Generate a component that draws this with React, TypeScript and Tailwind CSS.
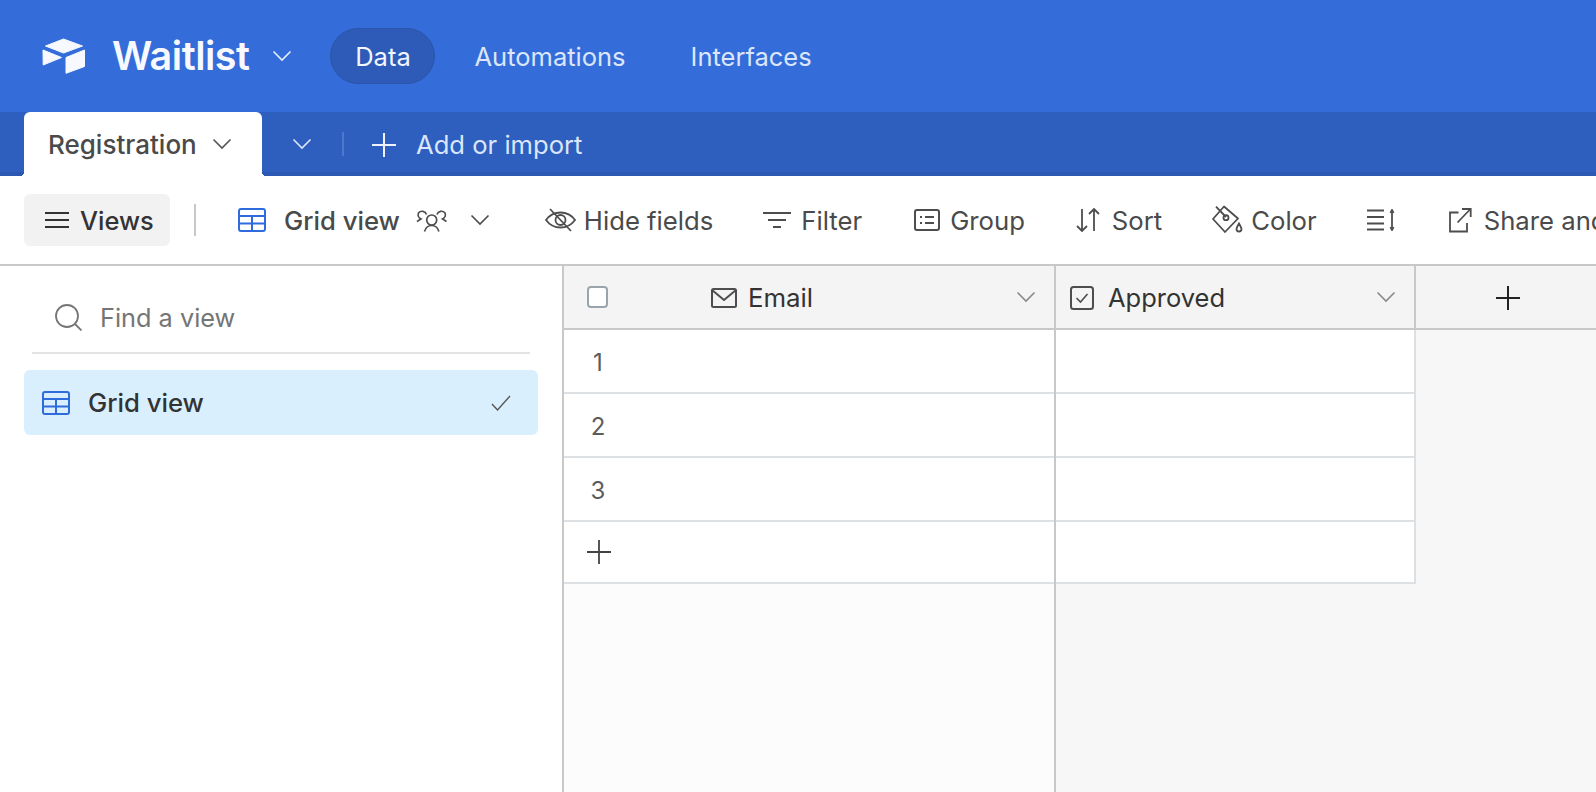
import React from "react";

const font = { fontFamily: "Inter, sans-serif" };

function Chevron({ className = "", color = "currentColor" }: { className?: string; color?: string }) {
  return (
    <svg width="20" height="12" viewBox="0 0 20 12" fill="none" className={"shrink-0 " + className}>
      <path d="M1.5 1.5 L10 10 L18.5 1.5" stroke={color} strokeWidth="1.6" />
    </svg>
  );
}

function GridIcon({ className = "" }: { className?: string }) {
  return (
    <svg width="28" height="24" viewBox="0 0 28 24" fill="none" className={"shrink-0 " + className}>
      <rect x="1" y="1" width="26" height="22" rx="2" stroke="#2f6bdd" strokeWidth="2" />
      <path d="M1 8H27M1 15.5H27M14 8V23" stroke="#2f6bdd" strokeWidth="2" />
    </svg>
  );
}

function Plus({ size = 24, color = "currentColor", width = 2 }: { size?: number; color?: string; width?: number }) {
  return (
    <svg width={size} height={size} viewBox="0 0 24 24" fill="none" className="shrink-0">
      <path d="M12 0V24M0 12H24" stroke={color} strokeWidth={width} />
    </svg>
  );
}

function Logo() {
  return (
    <svg width="44" height="36" viewBox="0 0 44 36" fill="#f7f9ff" className="shrink-0">
      <path d="M21.5 1 L40.5 8 L21.5 15 L3.5 8 Z" stroke="#f7f9ff" strokeWidth="1" strokeLinejoin="round" />
      <path d="M1 12 L19.5 19.5 L1.2 27 Z" stroke="#f7f9ff" strokeWidth="1" strokeLinejoin="round" />
      <path d="M42.5 12 V28.5 L24 35.3 V19.5 Z" stroke="#f7f9ff" strokeWidth="1" strokeLinejoin="round" />
    </svg>
  );
}

function Tool({ icon, label, className = "" }: { icon: React.ReactNode; label: string; className?: string }) {
  return (
    <div className={"flex items-center shrink-0 " + className}>
      {icon}
      <span className="pt-[2px] text-[25.7px] text-[#4a4a4a] whitespace-nowrap">{label}</span>
    </div>
  );
}

const stroke = "#4d4d4d";

function Row({ n, last }: { n?: number; last?: boolean }) {
  return (
    <div className={"flex " + (last ? "h-[62px]" : "h-[64px]")}>
      <div className="w-[490px] shrink-0 bg-white border-b-2 border-[#dde0e3] flex items-center">
        {n ? (
          <span className="w-[68px] pt-[4px] text-center text-[24px] text-[#5c5c5c]">{n}</span>
        ) : (
          <span className="ml-[23px] text-[#444444]">
            <Plus size={24} width={1.8} />
          </span>
        )}
      </div>
      <div className="w-[2px] shrink-0 bg-[#c8c8c8]" />
      <div className="w-[358px] shrink-0 bg-white border-b-2 border-[#dde0e3]" />
      <div className="w-[2px] shrink-0 bg-[#dde0e3]" />
    </div>
  );
}

export default function App() {
  return (
    <div className="w-[1596px] h-[792px] overflow-hidden bg-white flex flex-col" style={font}>
      <header className="h-[112px] shrink-0 bg-[#346dd9] flex items-center pl-[42px]">
        <Logo />
        <span className="ml-[26px] pt-[2px] text-[39.5px] font-semibold tracking-[-0.5px] text-[#f7f9ff] leading-none">Waitlist</span>
        <Chevron className="ml-[23px]" color="#e6edfb" />
        <div className="ml-[38px] w-[105px] h-[56px] pt-[3px] rounded-full bg-[#2d5bb7] border border-[#2a55ab] flex items-center justify-center text-[25.5px] text-[#f2f6ff]">
          Data
        </div>
        <span className="ml-[39px] pt-[3px] text-[25.5px] text-[#dbe6fb]">Automations</span>
        <span className="ml-[65px] pt-[3px] text-[25.5px] text-[#dbe6fb]">Interfaces</span>
      </header>

      <div className="h-[64px] shrink-0 bg-[#2e5fbe] shadow-[inset_0_-4px_0_#2a58b2] flex items-center pl-[24px]">
        <div className="relative w-[238px] h-[64px] shrink-0 bg-white rounded-t-[6px] flex items-center pl-[24px] text-[#4a4a4a]">
          <span className="pt-[2px] text-[26px] font-medium leading-none">Registration</span>
          <Chevron className="ml-[15px]" color="#555555" />
          <span className="absolute bottom-0 left-[-4px] w-[4px] h-[4px] bg-[radial-gradient(circle_at_0_0,#2a58b2_4px,#ffffff_4px)]" />
          <span className="absolute bottom-0 right-[-4px] w-[4px] h-[4px] bg-[radial-gradient(circle_at_100%_0,#2a58b2_4px,#ffffff_4px)]" />
        </div>
        <Chevron className="ml-[30px]" color="#dbe6fb" />
        <div className="ml-[30px] w-[2px] h-[24px] bg-[#4a78d0]" />
        <span className="ml-[28px] mt-[1px] text-[#eef3fe]">
          <Plus size={24} />
        </span>
        <span className="ml-[20px] pt-[2px] text-[25.6px] text-[#dbe6fb] whitespace-nowrap">Add or import</span>
      </div>

      <div className="h-[88px] shrink-0 flex items-center pl-[24px] overflow-hidden">
        <div className="w-[146px] h-[52px] shrink-0 rounded-[6px] bg-[#f2f2f2] flex items-center pl-[21px]">
          <svg width="24" height="18" viewBox="0 0 24 18" fill="none" className="shrink-0">
            <path d="M0 2H24M0 9H24M0 16H24" stroke="#333333" strokeWidth="2" />
          </svg>
          <span className="ml-[11px] pt-[3px] text-[25.4px] font-medium text-[#333333]">Views</span>
        </div>
        <div className="ml-[24px] w-[2px] h-[32px] shrink-0 bg-[#c8c8c8]" />
        <GridIcon className="ml-[42px]" />
        <span className="ml-[18px] pt-[2px] text-[25.7px] font-medium text-[#4a4a4a] whitespace-nowrap">Grid view</span>
        <svg width="32" height="24" viewBox="0 0 32 24" fill="none" className="ml-[16px] shrink-0" stroke="#4d4d4d" strokeWidth="1.7">
          <circle cx="15.700" cy="12" r="5" />
          <path d="M8.500 23.500c1-3.500 3-6 7.200-6s6.200 2.500 7.200 6" />
          <path d="M10.500 6.500a4.600 4.600 0 0 0-8-1.500a4.600 4.600 0 0 0 2.500 6L1 13.500" />
          <path d="M21 6.500a4.600 4.600 0 0 1 8-1.500a4.600 4.600 0 0 1-2.500 6L30.500 13.500" />
        </svg>
        <Chevron className="ml-[22px]" color="#4d4d4d" />
        <Tool
          className="ml-[55px] gap-[8px]"
          label="Hide fields"
          icon={
            <svg width="31" height="24" viewBox="0 0 31 24" fill="none" stroke={stroke} strokeWidth="1.8" className="shrink-0">
              <path d="M1 12C5 6.500 10 4.500 15.500 4.500S26 6.500 30 12C26 17.500 21 19.500 15.500 19.500S5 17.500 1 12Z" />
              <circle cx="15.500" cy="12" r="5" />
              <path d="M5 1L26 23" />
            </svg>
          }
        />
        <Tool
          className="ml-[50px] gap-[10px]"
          label="Filter"
          icon={
            <svg width="28" height="18" viewBox="0 0 28 18" fill="none" stroke={stroke} strokeWidth="2" className="shrink-0">
              <path d="M0 2H28M5 9H23M10 16H18" />
            </svg>
          }
        />
        <Tool
          className="ml-[52px] gap-[10px]"
          label="Group"
          icon={
            <svg width="26" height="22" viewBox="0 0 26 22" fill="none" stroke={stroke} strokeWidth="2" className="shrink-0">
              <rect x="1" y="1" width="24" height="20" rx="2" />
              <path d="M6 8H8M11 8H20M6 14H8M11 14H20" />
            </svg>
          }
        />
        <Tool
          className="ml-[51px] gap-[12px]"
          label="Sort"
          icon={
            <svg width="24" height="24" viewBox="0 0 24 24" fill="none" stroke={stroke} strokeWidth="1.8" className="shrink-0">
              <path d="M6 1V23M1 18L6 23L11 18M18 23V1M13 6L18 1L23 6" />
            </svg>
          }
        />
        <Tool
          className="ml-[50px] gap-[8px]"
          label="Color"
          icon={
            <svg width="31" height="30" viewBox="0 0 31 30" fill="none" stroke={stroke} strokeWidth="1.8" className="shrink-0">
              <path d="M4 1.700L14 12" />
              <path d="M12 1.500L26 13.500L13 27L1 14Z" strokeLinejoin="round" />
              <circle cx="14" cy="12.700" r="2.500" />
              <path d="M27 18.500C25.500 21 24.500 22.500 24.500 24a2.500 2.500 0 0 0 5 0C29.500 22.500 28.500 21 27 18.500Z" />
            </svg>
          }
        />
        <svg width="30" height="24" viewBox="0 0 30 24" fill="none" stroke={stroke} strokeWidth="2" className="ml-[50px] shrink-0">
          <path d="M0 2.500H17M0 9H17M0 15.500H17M0 21.500H17" />
          <path d="M25 2V22" strokeWidth="1.800" />
          <path d="M23 4.500L25 1L27 4.500ZM23 19.500L25 23L27 19.500Z" fill="#4d4d4d" strokeWidth="0.8" />
        </svg>
        <Tool
          className="ml-[52px] gap-[11px]"
          label="Share and sync"
          icon={
            <svg width="24" height="26" viewBox="0 0 24 26" fill="none" stroke={stroke} strokeWidth="1.8" className="shrink-0">
              <path d="M9.500 5.500H1V24.500H18V16" />
              <path d="M8.500 15.500L21.500 2M13 2H21.700V10" />
            </svg>
          }
        />
      </div>

      <div className="flex-1 min-h-0 border-t-2 border-[#c8c8c8] flex">
        <aside className="w-[562px] shrink-0 bg-white px-[24px]">
          <div className="mx-[8px] h-[88px] border-b-2 border-[#e3e3e3] flex items-center pl-[23px] pt-[17px]">
            <svg width="27" height="27" viewBox="0 0 27 27" fill="none" stroke="#757575" strokeWidth="1.8" className="shrink-0">
              <circle cx="12" cy="12" r="11" />
              <path d="M20 20L26.500 26.500" />
            </svg>
            <span className="ml-[18px] text-[25.3px] text-[#757575]">Find a view</span>
          </div>
          <div className="mt-[16px] h-[65px] rounded-[6px] bg-[#d9effd] flex items-center pl-[18px] pr-[27px]">
            <GridIcon />
            <span className="ml-[18px] pt-[2px] text-[25.7px] font-medium text-[#333333]">Grid view</span>
            <svg width="20" height="16" viewBox="0 0 20 16" fill="none" stroke="#555555" strokeWidth="1.4" className="ml-auto shrink-0">
              <path d="M1 9L6.500 15L19 1" />
            </svg>
          </div>
        </aside>
        <div className="w-[2px] shrink-0 bg-[#c8c8c8]" />
        <main className="flex-1 min-w-0 relative bg-[#f7f7f7] flex flex-col">
          <div className="flex h-[64px] shrink-0 bg-[#f4f4f4] border-b-2 border-[#c8c8c8]">
            <div className="w-[490px] shrink-0 flex items-center">
              <div className="ml-[23px] w-[21px] h-[22px] rounded-[4px] bg-white border-2 border-[#9aa5ab]" />
              <svg width="26" height="20" viewBox="0 0 26 20" fill="none" stroke="#4d4d4d" strokeWidth="2" className="ml-[103px] mt-[2px] shrink-0">
                <rect x="1" y="1" width="24" height="18" rx="1.500" />
                <path d="M1 2L13 12L25 2" />
              </svg>
              <span className="ml-[11px] pt-[2px] text-[25.8px] text-[#333333]">Email</span>
              <Chevron className="ml-auto mr-[18px]" color="#8a8a8a" />
            </div>
            <div className="w-[2px] shrink-0 bg-[#c8c8c8]" />
            <div className="w-[358px] shrink-0 flex items-center pl-[14px]">
              <svg width="24" height="24" viewBox="0 0 24 24" fill="none" stroke="#4d4d4d" strokeWidth="2" className="mt-[1px] shrink-0">
                <rect x="1" y="1" width="22" height="22" rx="2.500" />
                <path d="M6.500 12L10.500 16L17.500 8" strokeWidth="1.600" />
              </svg>
              <span className="ml-[14px] pt-[2px] text-[25.5px] text-[#333333]">Approved</span>
              <Chevron className="ml-auto mr-[18px]" color="#8a8a8a" />
            </div>
            <div className="w-[2px] shrink-0 bg-[#c8c8c8]" />
            <div className="w-[180px] shrink-0 flex items-center justify-center text-[#222222] pl-[4px] pt-[2px]">
              <Plus size={24} />
            </div>
          </div>
          <Row n={1} />
          <Row n={2} />
          <Row n={3} />
          <Row last />
          <div className="flex-1 min-h-0 flex">
            <div className="w-[490px] shrink-0 bg-[#fcfcfc]" />
            <div className="w-[2px] shrink-0 bg-[#c8c8c8]" />
          </div>
        </main>
      </div>
    </div>
  );
}
